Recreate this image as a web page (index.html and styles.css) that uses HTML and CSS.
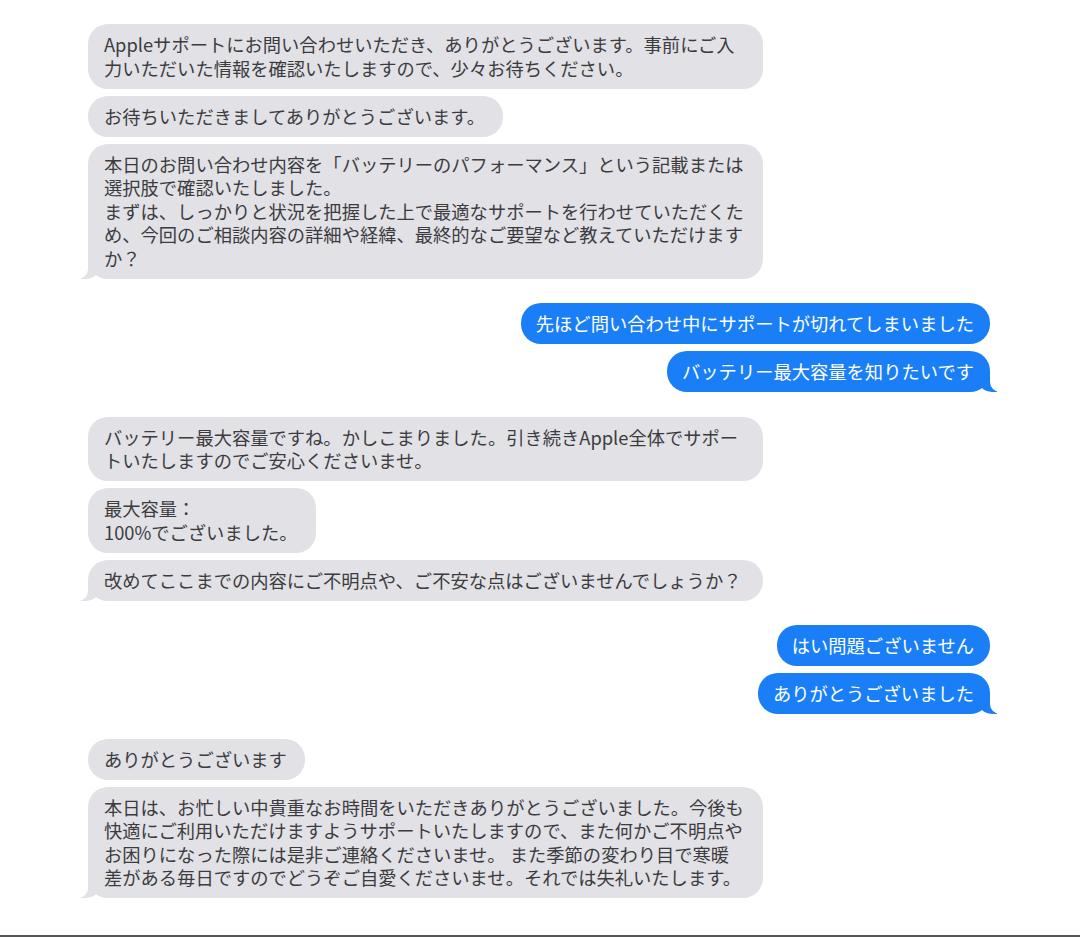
FILE: index.html
```html
<!DOCTYPE html>
<html lang="ja">
<head>
    <meta charset="UTF-8">
    <meta name="viewport" content="width=device-width, initial-scale=1.0">
    <title>メッセージ</title>
    <link rel="stylesheet" href="styles.css">
</head>
<body>

<div class="chat">
    <div class="group">
        <div class="msg them full">Appleサポートにお問い合わせいただき、ありがとうございます。事前にご入<br>力いただいた情報を確認いたしますので、少々お待ちください。</div>
        <div class="msg them">お待ちいただきましてありがとうございます。</div>
        <div class="msg them full tail">本日のお問い合わせ内容を「バッテリーのパフォーマンス」という記載または<br>選択肢で確認いたしました。<br>まずは、しっかりと状況を把握した上で最適なサポートを行わせていただくた<br>め、今回のご相談内容の詳細や経緯、最終的なご要望など教えていただけます<br>か？</div>
    </div>

    <div class="group">
        <div class="msg me">先ほど問い合わせ中にサポートが切れてしまいました</div>
        <div class="msg me tail">バッテリー最大容量を知りたいです</div>
    </div>

    <div class="group">
        <div class="msg them full">バッテリー最大容量ですね。かしこまりました。引き続きApple全体でサポー<br>トいたしますのでご安心くださいませ。</div>
        <div class="msg them">最大容量：<br>100%でございました。</div>
        <div class="msg them full tail">改めてここまでの内容にご不明点や、ご不安な点はございませんでしょうか？</div>
    </div>

    <div class="group">
        <div class="msg me">はい問題ございません</div>
        <div class="msg me tail">ありがとうございました</div>
    </div>

    <div class="group">
        <div class="msg them">ありがとうございます</div>
        <div class="msg them full tail">本日は、お忙しい中貴重なお時間をいただきありがとうございました。今後も<br>快適にご利用いただけますようサポートいたしますので、また何かご不明点や<br>お困りになった際には是非ご連絡くださいませ。 また季節の変わり目で寒暖<br>差がある毎日ですのでどうぞご自愛くださいませ。それでは失礼いたします。</div>
    </div>
</div>

<div class="bottom-line"></div>

</body>
</html>
```

FILE: styles.css
```css
body {
    margin: 0;
    background-color: #fff;
    font-family: "Noto Sans CJK JP", "Noto Sans", sans-serif;
    height: 937px;
    display: flex;
    flex-direction: column;
    overflow: hidden;
}
.chat {
    flex: 1;
    display: flex;
    flex-direction: column;
    gap: 24.5px;
    padding: 24px 90px 0 88px;
}
.group {
    display: flex;
    flex-direction: column;
    gap: 7px;
}
.msg {
    position: relative;
    max-width: 680px;
    box-sizing: border-box;
    padding: 9px 18px 8.5px 16px;
    font-size: 18.3px;
    line-height: 23.5px;
    border-radius: 20px;
    white-space: nowrap;
}
.them {
    align-self: flex-start;
    background-color: #e1e1e6;
    color: #3c3c3e;
}
.them.full {
    width: 675px;
}
.me {
    align-self: flex-end;
    background-color: #1a7ff6;
    color: #fff;
    padding-left: 15px;
    padding-right: 16px;
}

/* bubble tails */
.tail::before,
.tail::after {
    content: "";
    position: absolute;
    bottom: 0;
    height: 20px;
}
.them.tail::before {
    left: -7px;
    width: 20px;
    background-color: #e1e1e6;
    border-bottom-right-radius: 15px;
}
.them.tail::after {
    left: -10px;
    width: 10px;
    background-color: #fff;
    border-bottom-right-radius: 10px;
}
.me.tail::before {
    right: -7px;
    width: 20px;
    background-color: #1a7ff6;
    border-bottom-left-radius: 15px;
}
.me.tail::after {
    right: -10px;
    width: 10px;
    background-color: #fff;
    border-bottom-left-radius: 10px;
}

.bottom-line {
    height: 2px;
    background-color: #555;
}
```
